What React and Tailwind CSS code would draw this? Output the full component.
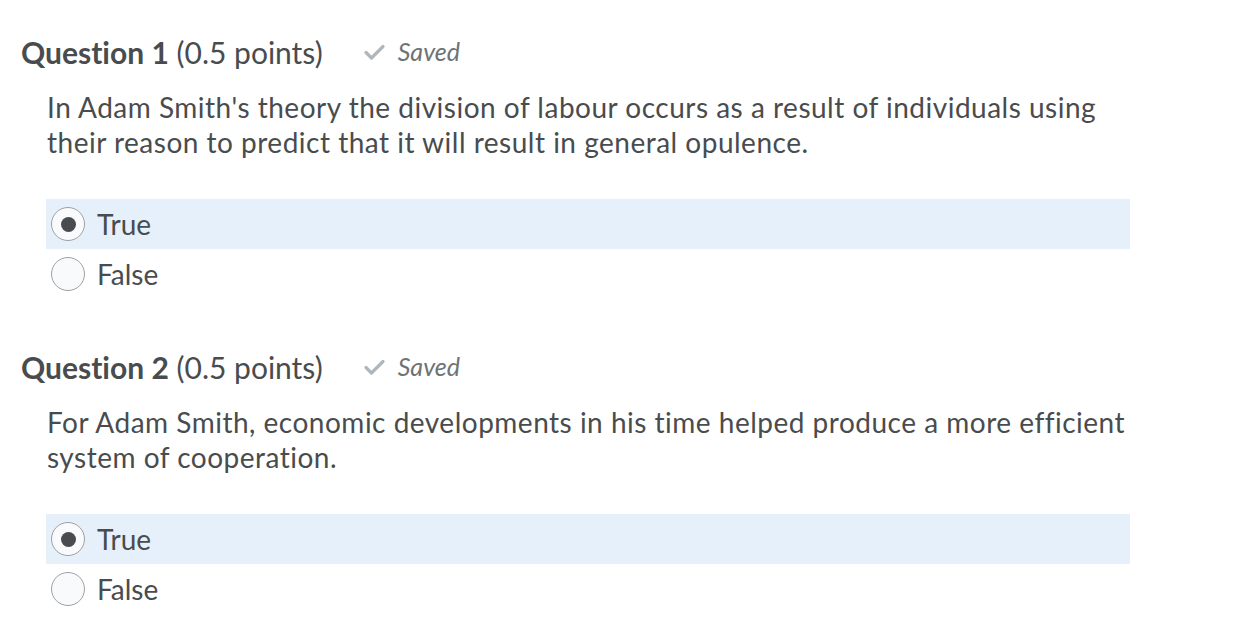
import React from "react";

const questions = [
  {
    n: 1,
    text: "In Adam Smith's theory the division of labour occurs as a result of individuals using their reason to predict that it will result in general opulence.",
  },
  {
    n: 2,
    text: "For Adam Smith, economic developments in his time helped produce a more efficient system of cooperation.",
  },
];

function Check() {
  return (
    <svg width="23" height="18" viewBox="0 0 23 18" className="block">
      <path d="M3 9.5 L8.5 15 L20 3.5" fill="none" stroke="#b0b7bc" strokeWidth="3.2" strokeLinecap="round" strokeLinejoin="round" />
    </svg>
  );
}

function Radio({ checked }) {
  return (
    <span className="flex h-[34px] w-[34px] shrink-0 items-center justify-center rounded-full border border-[#9ea1a3] bg-[#f9fafb]">
      {checked && <span className="h-[15px] w-[15px] rounded-full bg-[#494c4e]" />}
    </span>
  );
}

function Option({ label, checked }) {
  return (
    <div className={`flex h-[50px] items-center gap-[12px] pl-[5px] ${checked ? "bg-[#e6f0fb]" : ""}`}>
      <Radio checked={checked} />
      <span className="text-[28px]">{label}</span>
    </div>
  );
}

function Question({ n, text }) {
  return (
    <section className="pb-[48px]">
      <div className="flex items-center h-[40px] pl-[21px]">
        <h2 className="text-[30px]">
          <span className="font-bold">Question {n}</span> (0.5 points)
        </h2>
        <span className="ml-[40px] flex items-center gap-[12px] text-[25px] italic text-[#6e7376]">
          <Check />
          Saved
        </span>
      </div>
      <p className="mt-[18px] pl-[47px] pr-[100px] text-[28px] leading-[35px] tracking-[0.5px]">{text}</p>
      <div className="mt-[39px] ml-[46px] mr-[108px]">
        <Option label="True" checked />
        <Option label="False" />
      </div>
    </section>
  );
}

export default function App() {
  return (
    <div className="min-h-screen bg-white pt-[32px] text-[#494c4e] font-['Lato','Noto_Sans',sans-serif] [font-variant-ligatures:none]">
      {questions.map((q) => (
        <Question key={q.n} {...q} />
      ))}
    </div>
  );
}
